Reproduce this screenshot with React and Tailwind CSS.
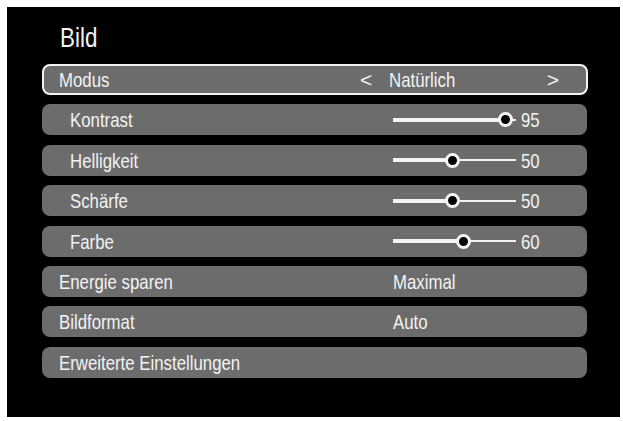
import React from "react";

const font = { fontFamily: '"Liberation Sans", Arial, sans-serif' };

function T({ children }) {
  return <span className="inline-block origin-left scale-x-80 whitespace-nowrap">{children}</span>;
}

function Slider({ value }) {
  const pos = value * 1.18;
  return (
    <div className="flex items-center">
      <div className="relative w-[123px] h-[15px] flex-none">
        <div className="absolute left-0 right-0 top-[6.5px] h-[2px] bg-[#f0f0f0]" />
        <div className="absolute left-0 top-[5.5px] h-[4px] bg-[#f4f4f4]" style={{ width: pos }} />
        <div
          className="absolute top-0 w-[15px] h-[15px] rounded-full bg-black border-[3px] border-[#f4f4f4]"
          style={{ left: pos - 7.5 }}
        />
      </div>
      <span className="ml-[5px]">
        <T>{value}</T>
      </span>
    </div>
  );
}

function Row({ label, sub, children }) {
  return (
    <div className="flex items-center h-[31px] w-[545px] rounded-[8px] border-2 border-transparent bg-[#6c6c6c] pl-[15px]">
      <div className={"flex-none w-[334px] " + (sub ? "pl-[11px]" : "")}>
        <T>{label}</T>
      </div>
      <div className="flex-1 flex items-center">{children}</div>
    </div>
  );
}

export default function App() {
  return (
    <div className="w-[623px] h-[421px] bg-white pt-[7px] pl-[7px]" style={font}>
      <div className="w-[613px] h-[410px] bg-black text-[#f3f3f3] overflow-hidden">
        <div className="mt-[17px] ml-[53px] text-[28px] leading-[28px]">
          <T>Bild</T>
        </div>
        <div className="mt-[12px] ml-[35px] flex flex-col gap-[9.4px] text-[21px] leading-[21px]">
          <div className="flex items-center h-[31px] w-[546px] rounded-[8px] border-2 border-[#f2f2f2] bg-[#6c6c6c] pl-[15px] pr-[27px]">
            <div className="flex-none w-[301px]">
              <T>Modus</T>
            </div>
            <div className="flex-none w-[29px]">&lt;</div>
            <div className="flex-1">
              <T>Natürlich</T>
            </div>
            <div>&gt;</div>
          </div>
          <Row label="Kontrast" sub>
            <Slider value={95} />
          </Row>
          <Row label="Helligkeit" sub>
            <Slider value={50} />
          </Row>
          <Row label="Schärfe" sub>
            <Slider value={50} />
          </Row>
          <Row label="Farbe" sub>
            <Slider value={60} />
          </Row>
          <Row label="Energie sparen">
            <T>Maximal</T>
          </Row>
          <Row label="Bildformat">
            <T>Auto</T>
          </Row>
          <Row label="Erweiterte Einstellungen" />
        </div>
      </div>
    </div>
  );
}
